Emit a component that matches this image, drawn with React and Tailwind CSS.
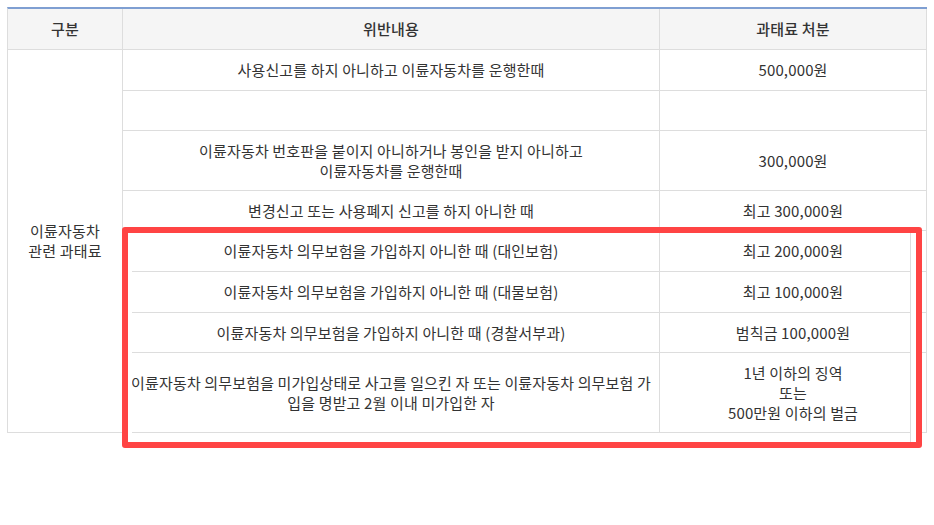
import React from "react";

const cell = "border-r border-b border-[#dddddd] flex flex-col items-center justify-center text-center leading-[20px]";

export default function App() {
  return (
    <div
      className="relative w-[934px] h-[525px] bg-white text-[15px] tracking-[0.15px] text-[#333333] pl-[7px] pt-[7px]"
      style={{ fontFamily: '"Noto Sans CJK KR", "Noto Sans", sans-serif' }}
    >
      <div className="w-[920px] border-t-2 border-t-[#7f9fd2] border-l border-l-[#dddddd] grid grid-cols-[115px_537px_267px] grid-rows-[41px_41px_40px_60px_40px_41px_41px_40px_80px]">
        <div className={`${cell} bg-[#f5f5f5] font-medium`}>구분</div>
        <div className={`${cell} bg-[#f5f5f5] font-medium`}>위반내용</div>
        <div className={`${cell} bg-[#f5f5f5] font-medium`}>과태료 처분</div>

        <div className={`${cell} row-span-8`}>
          <span>이륜자동차</span>
          <span>관련 과태료</span>
        </div>

        <div className={cell}>사용신고를 하지 아니하고 이륜자동차를 운행한때</div>
        <div className={cell}>500,000원</div>

        <div className={cell}></div>
        <div className={cell}></div>

        <div className={cell}>
          <span>이륜자동차 번호판을 붙이지 아니하거나 봉인을 받지 아니하고</span>
          <span>이륜자동차를 운행한때</span>
        </div>
        <div className={cell}>300,000원</div>

        <div className={cell}>변경신고 또는 사용폐지 신고를 하지 아니한 때</div>
        <div className={cell}>최고 300,000원</div>

        <div className={cell}>이륜자동차 의무보험을 가입하지 아니한 때 (대인보험)</div>
        <div className={cell}>최고 200,000원</div>

        <div className={cell}>이륜자동차 의무보험을 가입하지 아니한 때 (대물보험)</div>
        <div className={cell}>최고 100,000원</div>

        <div className={cell}>이륜자동차 의무보험을 가입하지 아니한 때 (경찰서부과)</div>
        <div className={cell}>범칙금 100,000원</div>

        <div className={cell}>
          <span className="whitespace-nowrap">이륜자동차 의무보험을 미가입상태로 사고를 일으킨 자 또는 이륜자동차 의무보험 가</span>
          <span className="whitespace-nowrap">입을 명받고 2월 이내 미가입한 자</span>
        </div>
        <div className={cell}>
          <span>1년 이하의 징역</span>
          <span>또는</span>
          <span>500만원 이하의 벌금</span>
        </div>
      </div>

      <div className="absolute left-[122px] top-[227px] w-[800px] h-[221px] border-[6px] border-[#ff4444] rounded-[3px] shadow-[inset_4px_0_0_#ffffff,inset_-5px_0_0_#ffffff,inset_-6px_0_0_#dddddd]" />
    </div>
  );
}
